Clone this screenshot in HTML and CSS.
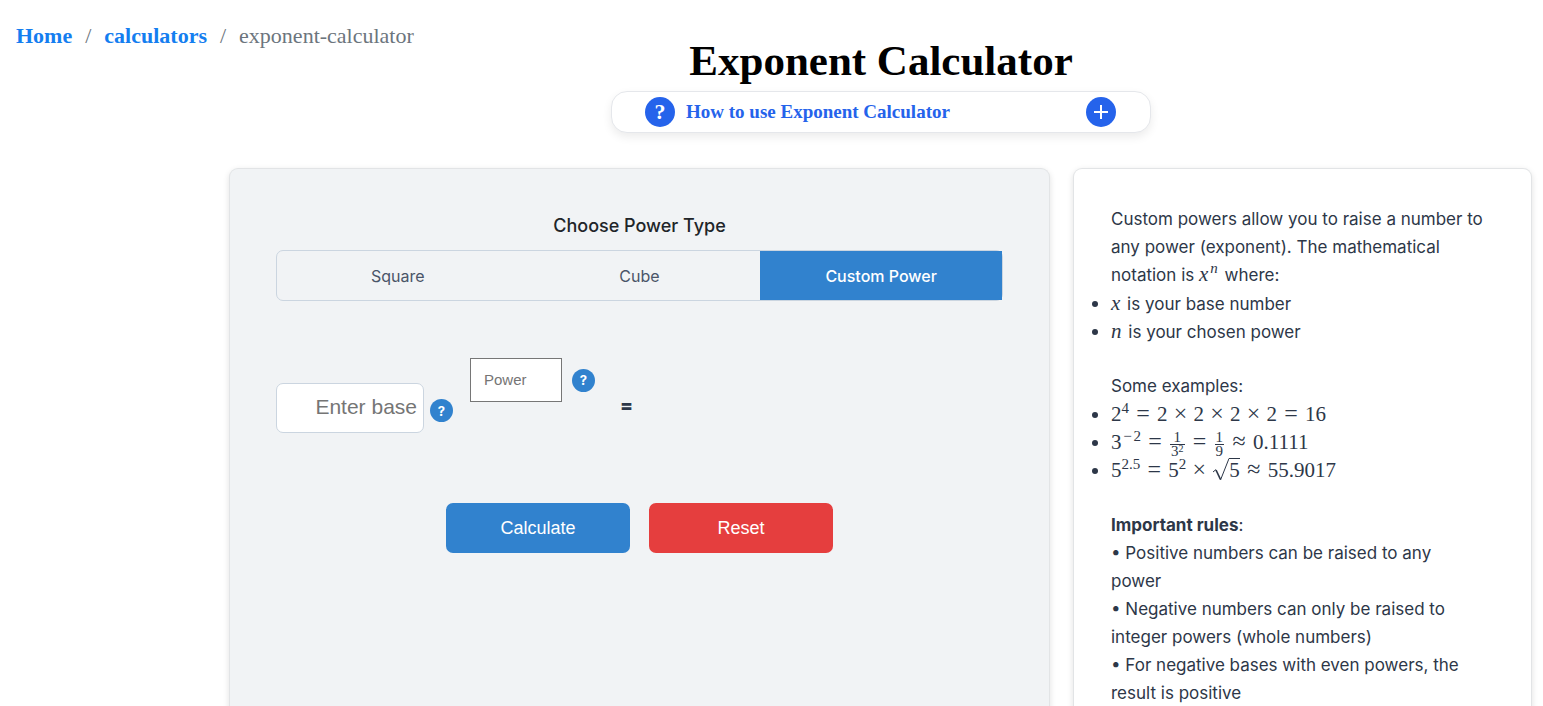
FILE: index.html
```html
<!DOCTYPE html>
<html lang="en">
<head>
<meta charset="utf-8">
<title>Exponent Calculator</title>
<link rel="stylesheet" href="styles.css">
</head>
<body>
<div class="top">
  <nav class="breadcrumb" aria-label="Breadcrumb">
    <a href="#">Home</a><span class="slash">/</span><a href="#">calculators</a><span class="slash">/</span><span>exponent-calculator</span>
  </nav>
  <header class="header">
    <h1 class="title">Exponent Calculator</h1>
    <button class="howto" type="button">
      <span class="howto-icon">?</span>
      <span class="howto-text">How to use Exponent Calculator</span>
      <span class="howto-icon"><svg width="16" height="16" viewBox="0 0 16 16" fill="none" stroke="#fff" stroke-width="2"><path d="M8 1v14M1 8h14"/></svg></span>
    </button>
  </header>
</div>
<main class="layout">
  <section class="panel calculator">
    <h2 class="choose">Choose Power Type</h2>
    <div class="tabs">
      <button class="tab" type="button">Square</button>
      <button class="tab" type="button">Cube</button>
      <button class="tab active" type="button">Custom Power</button>
    </div>
    <div class="equation">
      <div class="base-group">
        <input class="base" type="text" placeholder="Enter base" aria-label="Base">
        <button class="help" type="button" aria-label="Help for base">?</button>
      </div>
      <div class="power-group">
        <input class="power" type="text" placeholder="Power" aria-label="Power">
        <button class="help" type="button" aria-label="Help for power">?</button>
      </div>
      <span class="equals">=</span>
    </div>
    <div class="actions">
      <button class="action calculate" type="button">Calculate</button>
      <button class="action reset" type="button">Reset</button>
    </div>
  </section>
  <aside class="panel info">
    <p>Custom powers allow you to raise a number to<br>any power (exponent). The mathematical<br>notation is <span class="math"><i>x</i><sup><i>n</i></sup></span> where:</p>
    <ul>
      <li><span class="math"><i>x</i></span> is your base number</li>
      <li><span class="math"><i>n</i></span> is your chosen power</li>
    </ul>
    <p class="spaced">Some examples:</p>
    <ul>
      <li><span class="math">2<sup>4</sup><span class="rel">=</span>2<span class="bin">×</span>2<span class="bin">×</span>2<span class="bin">×</span>2<span class="rel">=</span>16</span></li>
      <li><span class="math">3<sup><span class="neg">−</span>2</sup><span class="rel">=</span><span class="frac"><span>1</span><span class="den">3<sup>2</sup></span></span><span class="rel">=</span><span class="frac"><span>1</span><span class="den">9</span></span><span class="rel">≈</span>0.1111</span></li>
      <li><span class="math">5<sup>2.5</sup><span class="rel">=</span>5<sup>2</sup><span class="bin">×</span><span class="root"><svg class="radical" width="17" height="23" viewBox="0 0 17 23" fill="none" stroke="#2d3748"><path d="M1 14l3-2.500" stroke-width="1"/><path d="M4 12l4.500 9.500" stroke-width="1.700"/><path d="M8.500 22L17 .5" stroke-width="1"/></svg><span class="radicand">5</span></span><span class="rel">≈</span>55.9017</span></li>
    </ul>
    <p class="spaced"><strong>Important rules</strong>:</p>
    <p>• Positive numbers can be raised to any<br>power</p>
    <p>• Negative numbers can only be raised to<br>integer powers (whole numbers)</p>
    <p>• For negative bases with even powers, the<br>result is positive</p>
  </aside>
</main>
</body>
</html>
```
FILE: styles.css
```css
* { box-sizing: border-box; }
html { height: 100%; overflow: hidden; }
body {
  height: 100%;
  margin: 0;
  display: flex;
  flex-direction: column;
  overflow: hidden;
  background: #fff;
  color: #2d3748;
  font-family: Inter, sans-serif;
}
h1, h2, p, ul { margin: 0; padding: 0; }
button { border: 0; padding: 0; cursor: pointer; }

.top { display: grid; flex: none; }
.breadcrumb {
  grid-area: 1 / 1;
  align-self: start;
  justify-self: start;
  z-index: 1;
  padding: 23px 16px;
  font: 22px/26px "Liberation Serif", serif;
  color: #6c757d;
}
.breadcrumb a { color: #147ef0; font-weight: 700; text-decoration: none; }
.slash { margin: 0 13px; }
.header {
  grid-area: 1 / 1;
  margin-left: 219px;
  padding-top: 35px;
  display: flex;
  flex-direction: column;
  align-items: center;
}
.title { font: 700 43px/52px "Liberation Serif", serif; color: #000; }
.howto {
  width: 540px;
  height: 42px;
  margin-top: 4px;
  padding: 0 34px 0 33px;
  display: flex;
  align-items: center;
  gap: 11px;
  border: 1px solid #e5e7eb;
  border-radius: 16px;
  background: #fff;
  box-shadow: 0 4px 10px rgba(0, 0, 0, .08);
  color: #2563eb;
  font: 700 19px/24px "Liberation Serif", serif;
}
.howto-text { flex: 1; text-align: left; }
.howto-icon {
  width: 30px;
  height: 30px;
  display: grid;
  place-items: center;
  border-radius: 50%;
  background: #2563eb;
  color: #fff;
  font-size: 22px;
}

.layout {
  flex: 1;
  display: grid;
  grid-template-columns: 821fr 459fr;
  gap: 23px;
  margin: 35px 11px 0 229px;
  min-height: 0;
}
.panel {
  min-width: 0;
  border: 1px solid #e2e4e6;
  border-bottom: 0;
  border-radius: 9px 9px 0 0;
  box-shadow: 0 2px 6px rgba(0, 0, 0, .12);
}
.calculator { padding: 43px 46px; background: #f1f3f5; }
.choose { text-align: center; font-size: 18px; line-height: 28px; font-weight: 500; color: #212529; }
.tabs {
  display: grid;
  grid-template-columns: repeat(3, 1fr);
  height: 51px;
  margin-top: 10px;
  border: 1px solid #cbd5e0;
  border-radius: 7px;
}
.tab { background: transparent; color: #4a5568; font: 16px Inter, sans-serif; }
.tab.active { background: #3182ce; color: #fff; font-weight: 500; }
.equation { display: flex; align-items: flex-start; margin-top: 57px; }
.base-group, .power-group { display: flex; align-items: center; }
.base-group { gap: 6px; margin-top: 25px; }
.base-group .help { margin-top: 5px; }
.power-group { gap: 10px; margin-left: 17px; }
.base {
  width: 148px;
  height: 50px;
  padding: 0 6px 2px;
  border: 1px solid #cbd5e0;
  border-radius: 7px;
  background: #fff;
  text-align: right;
  font: 21px "Liberation Sans", sans-serif;
}
.power {
  width: 92px;
  height: 44px;
  padding: 0 13px 2px;
  border: 1px solid #767676;
  background: #fff;
  font: 15px "Liberation Sans", sans-serif;
}
input::placeholder { color: #757575; opacity: 1; }
.help {
  width: 23px;
  height: 23px;
  border-radius: 50%;
  background: #3182ce;
  color: #fff;
  font: 700 13px Inter, sans-serif;
}
.equals { margin: 36px 0 0 25px; font-size: 19px; line-height: 24px; font-weight: 800; }
.actions { display: flex; justify-content: center; gap: 19px; margin-top: 70px; }
.action {
  width: 184px;
  height: 50px;
  border-radius: 7px;
  color: #fff;
  font: 18px "Liberation Sans", sans-serif;
}
.calculate { background: #3182ce; }
.reset { background: #e53e3e; }

.info { padding: 36px 37px; background: #fff; font-size: 17px; line-height: 28px; }
.info p { white-space: nowrap; }
.info li { height: 28px; }
.info li::marker { font-size: 20px; }
.spaced { padding-top: 27px; }
.info strong { font-weight: 700; }
.math { font: 21px/24px "Liberation Serif", serif; white-space: nowrap; }
.math i { margin-right: 2px; }
.math sup { font-size: 15px; line-height: 0; vertical-align: 8px; }
.neg { display: inline-block; width: 12px; text-align: center; }
.rel, .bin { display: inline-block; text-align: center; font-size: 24px; line-height: 20px; }
.rel { width: 28px; }
.bin { width: 26px; }
.frac {
  display: inline-flex;
  flex-direction: column;
  vertical-align: middle;
  margin: 0 1px;
  text-align: center;
  font-size: 15px;
  line-height: 13px;
}
.den { border-top: 1px solid #2d3748; padding: 0 1px; }
.den sup { font-size: 10px; vertical-align: 4px; }
.root { display: inline-flex; align-items: flex-start; height: 23px; vertical-align: -4px; }
.radical { display: block; }
.radicand { border-top: 1px solid #2d3748; line-height: 22px; }
```
